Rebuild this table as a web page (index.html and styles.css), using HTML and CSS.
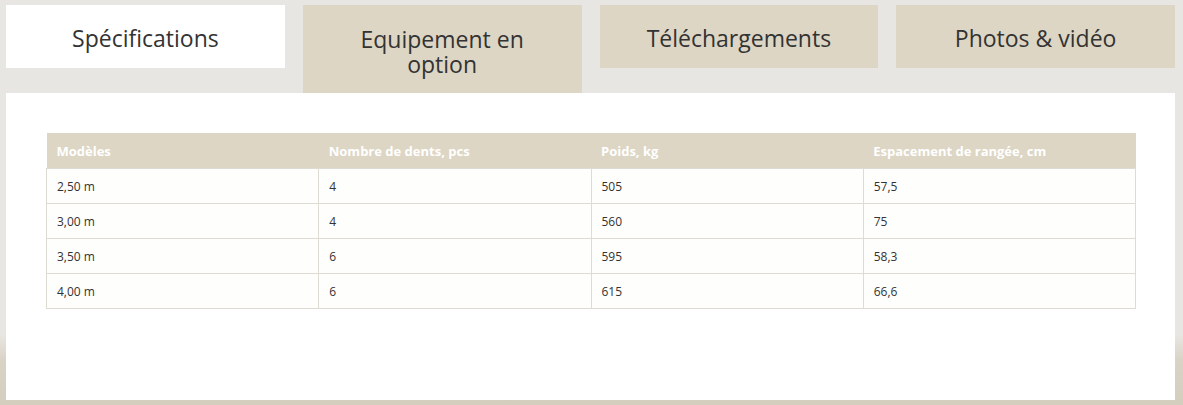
FILE: index.html
```html
<!DOCTYPE html>
<html lang="fr">
<head>
<meta charset="utf-8">
<title>Spécifications</title>
<link rel="stylesheet" href="styles.css">
</head>
<body>
<div class="page">
  <nav class="tabs">
    <div class="tab active">Spécifications</div>
    <div class="tab open">Equipement en<br>option</div>
    <div class="tab">Téléchargements</div>
    <div class="tab">Photos &amp; vidéo</div>
  </nav>
  <section class="panel">
    <table class="specs">
      <thead>
        <tr><th>Modèles</th><th>Nombre de dents, pcs</th><th>Poids, kg</th><th>Espacement de rangée, cm</th></tr>
      </thead>
      <tbody>
        <tr><td>2,50 m</td><td>4</td><td>505</td><td>57,5</td></tr>
        <tr><td>3,00 m</td><td>4</td><td>560</td><td>75</td></tr>
        <tr><td>3,50 m</td><td>6</td><td>595</td><td>58,3</td></tr>
        <tr><td>4,00 m</td><td>6</td><td>615</td><td>66,6</td></tr>
      </tbody>
    </table>
  </section>
</div>
</body>
</html>
```
FILE: styles.css
```css
html, body {
  margin: 0;
  padding: 0;
}
body {
  width: 1183px;
  height: 405px;
  overflow: hidden;
  background: linear-gradient(to bottom, #e8e6e2 0px, #e8e6e2 335px, #d9d3c6 360px, #d4cebf 405px);
  font-family: "Open Sans", sans-serif;
}
.page {
  padding: 5px 8px 0 6px;
}
.tabs {
  display: flex;
  gap: 18px;
  align-items: flex-start;
}
.tab {
  flex: 1;
  height: 63px;
  background: #ddd6c5;
  color: #333;
  font-family: "Open Sans", sans-serif;
  font-size: 23px;
  line-height: 25px;
  display: flex;
  align-items: center;
  justify-content: center;
  text-align: center;
  box-sizing: border-box;
  padding-top: 3px;
}
.tab.active {
  background: #fff;
}
.tab.open {
  height: 88px;
  align-items: flex-start;
  padding-top: 22px;
}
.panel {
  background: #fff;
  height: 307px;
  padding: 40px 40px 0 40px;
  box-sizing: border-box;
}
.specs {
  width: 1090px;
  border-collapse: collapse;
  table-layout: fixed;
  font-size: 12px;
  color: #333;
}
.specs th {
  background: #ddd6c5;
  color: #fff;
  font-weight: 700;
  text-align: left;
  height: 35px;
  padding: 0 10px;
  font-size: 13px;
}
.specs td {
  height: 34px;
  padding: 0 10px;
  border: 1px solid #dedbd3;
  background: #fefefd;
}
```
